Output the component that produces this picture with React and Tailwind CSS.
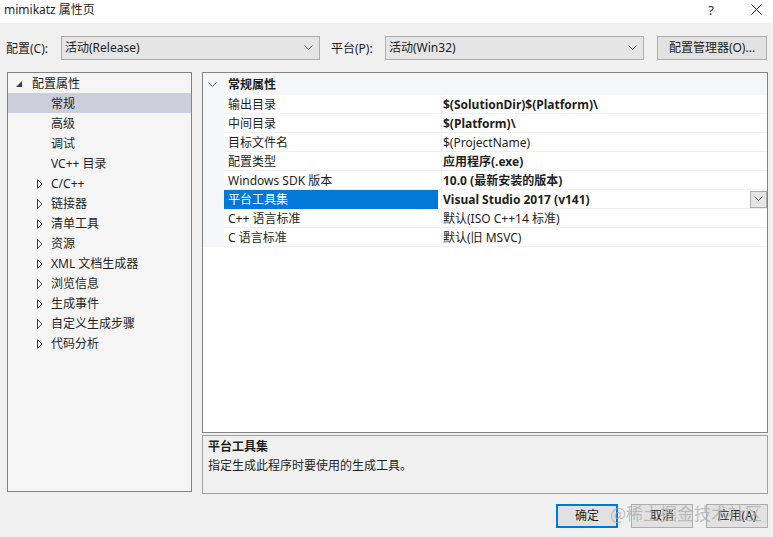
import React from "react";

const font = { fontFamily: '"Noto Sans", "Noto Sans CJK SC", sans-serif' };

function Chevron({ className = "" }) {
  return (
    <svg width="9" height="6" viewBox="0 0 9 6" className={className}>
      <path d="M0.5 0.5 L4.5 4.5 L8.5 0.5" fill="none" stroke="#606060" strokeWidth="1" />
    </svg>
  );
}

function Combo({ text, width }) {
  return (
    <div className={`h-[24px] ${width} bg-[#e5e5e5] border border-[#adadad] flex items-center justify-between pl-[3px] pr-[6px]`}>
      <span className="text-[12px] text-[#1e1e1e]">{text}</span>
      <Chevron />
    </div>
  );
}

function Collapsed() {
  return (
    <svg width="6" height="10" viewBox="0 0 6 10">
      <path d="M0.5 0.5 L5 5 L0.5 9.5 Z" fill="none" stroke="#3c3c3c" strokeWidth="1" />
    </svg>
  );
}

const tree = [
  { label: "常规", selected: true },
  { label: "高级" },
  { label: "调试" },
  { label: "VC++ 目录" },
  { label: "C/C++", arrow: true },
  { label: "链接器", arrow: true },
  { label: "清单工具", arrow: true },
  { label: "资源", arrow: true },
  { label: "XML 文档生成器", arrow: true },
  { label: "浏览信息", arrow: true },
  { label: "生成事件", arrow: true },
  { label: "自定义生成步骤", arrow: true },
  { label: "代码分析", arrow: true },
];

const props = [
  { name: "输出目录", value: "$(SolutionDir)$(Platform)\\", bold: true },
  { name: "中间目录", value: "$(Platform)\\", bold: true },
  { name: "目标文件名", value: "$(ProjectName)" },
  { name: "配置类型", value: "应用程序(.exe)", bold: true },
  { name: "Windows SDK 版本", value: "10.0 (最新安装的版本)", bold: true },
  { name: "平台工具集", value: "Visual Studio 2017 (v141)", bold: true, selected: true },
  { name: "C++ 语言标准", value: "默认(ISO C++14 标准)" },
  { name: "C 语言标准", value: "默认(旧 MSVC)" },
];

export default function App() {
  return (
    <div className="w-[773px] h-[537px] bg-[#f0f0f0] relative overflow-hidden text-[#1e1e1e]" style={font}>
      {/* title bar */}
      <div className="h-[23px] bg-white flex items-start justify-between pl-[4px] pt-[1px]">
        <span className="text-[12px] leading-[18px]">mimikatz 属性页</span>
        <div className="flex items-start">
          <span className="text-[13px] leading-[18px] mr-[37px]">?</span>
          <svg width="11" height="11" viewBox="0 0 11 11" className="mt-[3px] mr-[11px]">
            <path d="M0.5 0.5 L10.5 10.5 M10.5 0.5 L0.5 10.5" stroke="#1e1e1e" strokeWidth="1" />
          </svg>
        </div>
      </div>

      {/* configuration row */}
      <div className="mt-[13px] h-[24px] flex items-center">
        <span className="ml-[6px] w-[55px] text-[12px] pt-[1px]">配置(C):</span>
        <Combo text="活动(Release)" width="w-[259px]" />
        <span className="ml-[11px] w-[54px] text-[12px] pt-[1px]">平台(P):</span>
        <Combo text="活动(Win32)" width="w-[259px]" />
        <button className="ml-[13px] -mt-[1px] w-[110px] h-[24px] bg-[#e1e1e1] border border-[#adadad] text-[12px]">
          配置管理器(O)...
        </button>
      </div>

      {/* main area */}
      <div className="mt-[12px] flex">
        {/* tree */}
        <div className="ml-[7px] w-[185px] h-[420px] bg-[#f5f5f5] border border-[#828282] flex flex-col">
          <div className="h-[20px] flex items-center text-[12px] pt-[1px]">
            <svg width="6" height="6" viewBox="0 0 6 6" className="ml-[8px] mr-[10px]">
              <path d="M6 0 L6 6 L0 6 Z" fill="#3c3c3c" />
            </svg>
            配置属性
          </div>
          {tree.map((t) => (
            <div
              key={t.label}
              className={`h-[20px] flex items-center text-[12px] pt-[1px] ${t.selected ? "bg-[#cccedb]" : ""}`}
            >
              <div className="w-[43px] flex justify-end pr-[8px]">{t.arrow ? <Collapsed /> : null}</div>
              {t.label}
            </div>
          ))}
        </div>

        {/* right column */}
        <div className="ml-[10px] w-[566px] flex flex-col">
          <div className="h-[361px] bg-white border border-[#828282] flex flex-col">
            <div className="h-[22px] bg-[#f5f6f7] flex items-center text-[12px] font-bold pt-[2px]">
              <Chevron className="ml-[5px] mr-[11px]" />
              常规属性
            </div>
            {props.map((p) => (
              <div key={p.name} className="h-[19px] flex text-[12px]">
                <div className="w-[21px] bg-[#f5f6f7]" />
                <div
                  className={`w-[214px] pl-[4px] pt-[2px] flex items-center border-b ${
                    p.selected ? "bg-[#0078d7] text-white border-[#0078d7]" : "border-[#f0f0f0]"
                  }`}
                >
                  {p.name}
                </div>
                <div className="w-[3px] border-b border-[#f0f0f0] bg-white" />
                <div
                  className={`flex-1 pl-[1px] flex items-center justify-between border-b border-[#f0f0f0] border-l border-l-[#f0f0f0] ${
                    p.bold ? "font-bold" : ""
                  }`}
                >
                  <span className="pt-[2px]">{p.value}</span>
                  {p.selected ? (
                    <div className="w-[17px] h-[17px] bg-[#e5e5e5] border border-[#adadad] flex items-center justify-center">
                      <Chevron />
                    </div>
                  ) : null}
                </div>
              </div>
            ))}
          </div>

          {/* description */}
          <div className="mt-[2px] h-[59px] border border-[#a0a0a0] bg-[#f0f0f0] pl-[5px] pt-[1px] text-[12px]">
            <div className="font-bold leading-[19px]">平台工具集</div>
            <div className="leading-[19px]">指定生成此程序时要使用的生成工具。</div>
          </div>
        </div>
      </div>

      {/* buttons */}
      <div className="mt-[10px] flex justify-end gap-[13px] pr-[5px]">
        <button className="w-[62px] h-[24px] bg-[#e1e1e1] border-2 border-[#0078d7] text-[12px]">确定</button>
        <button className="w-[62px] h-[24px] bg-[#e1e1e1] border border-[#adadad] text-[12px]">取消</button>
        <button className="w-[62px] h-[24px] bg-[#e1e1e1] border border-[#adadad] text-[12px]">应用(A)</button>
      </div>

      {/* watermark */}
      <div
        className="absolute left-[610px] top-[500px] text-[17px] text-[#a8a8a8]/70 pointer-events-none"
        style={{ fontFamily: '"Noto Sans CJK SC", sans-serif' }}
      >
        @稀土掘金技术社区
      </div>
    </div>
  );
}
